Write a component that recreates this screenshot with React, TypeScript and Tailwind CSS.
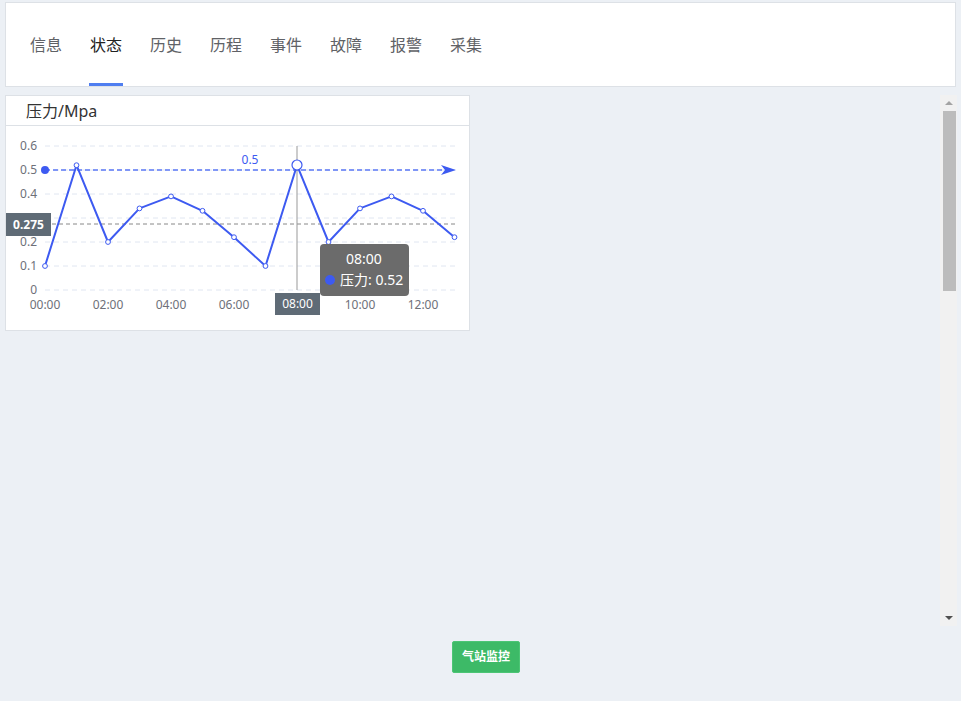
import React from "react";

const tabs = ["信息", "状态", "历史", "历程", "事件", "故障", "报警", "采集"];
const data = [0.1, 0.52, 0.2, 0.34, 0.39, 0.33, 0.22, 0.1, 0.52, 0.2, 0.34, 0.39, 0.33, 0.22];

const X0 = 45;
const STEP = 31.5;
const Y0 = 290;
const PER = 240; // px per 1.0
const xs = (i: number) => X0 + i * STEP;
const ys = (v: number) => Y0 - v * PER;
const font = '"Noto Sans", "Noto Sans CJK SC", sans-serif';

function PressureChart() {
  const pts = data.map((v, i) => `${xs(i)},${ys(v)}`).join(" ");
  return (
    <svg width="463" height="204" className="block">
      <g transform="translate(-6,-126)" style={{ fontFamily: font }}>
        {[0, 0.1, 0.2, 0.3, 0.4, 0.5, 0.6].map((v) => (
          <line key={v} x1={45} x2={456} y1={ys(v)} y2={ys(v)} stroke="#e0e6f1" strokeDasharray="5 4" />
        ))}
        {[0, 0.1, 0.2, 0.4, 0.5, 0.6].map((v) => (
          <text key={v} x={37} y={ys(v) + 4} fontSize="12" fill="#6e7079" textAnchor="end">
            {v === 0 ? "0" : v.toFixed(1)}
          </text>
        ))}
        {["00:00", "02:00", "04:00", "06:00", "10:00", "12:00"].map((t) => (
          <text key={t} x={xs(parseInt(t))} y={309} fontSize="12" fill="#6e7079" textAnchor="middle">
            {t}
          </text>
        ))}

        {/* mark line 0.5 */}
        <line x1={45} x2={446} y1={170} y2={170} stroke="#5b78f5" strokeWidth="1.6" strokeDasharray="5 3" />
        <circle cx={45} cy={170} r={4} fill="#3d5af1" />
        <path d="M441 165 L456 170 L441 175 L445 170 Z" fill="#3d5af1" />
        <text x={250} y={164} fontSize="12" fill="#3d5af1" textAnchor="middle">0.5</text>

        {/* average line */}
        <line x1={45} x2={456} y1={224} y2={224} stroke="#888" strokeDasharray="4 3" />

        {/* axis pointer */}
        <line x1={297} x2={297} y1={146} y2={290} stroke="#999" />

        <polyline points={pts} fill="none" stroke="#3d5af1" strokeWidth="2" strokeLinejoin="round" />
        {data.map((v, i) =>
          i === 8 ? null : (
            <circle key={i} cx={xs(i)} cy={ys(v)} r={2.4} fill="#fff" stroke="#3d5af1" strokeWidth="1" />
          )
        )}
        <circle cx={297} cy={165} r={5} fill="#fff" stroke="#3d5af1" strokeWidth="1.2" />

        <rect x={6} y={213} width={45} height={23} fill="#5f6b76" />
        <text x={28.5} y={229} fontSize="12" fontWeight="bold" fill="#fff" textAnchor="middle">0.275</text>

        <rect x={275} y={293} width={45} height={22} fill="#5f6b76" />
        <text x={297.5} y={308} fontSize="12" fill="#fff" textAnchor="middle">08:00</text>

        <rect x={320} y={244} width={89} height={52} rx={4} fill="#6b6b6b" />
        <text x={364} y={264} fontSize="14" fill="#fff" textAnchor="middle">08:00</text>
        <circle cx={330} cy={280} r={5} fill="#3d5af1" />
        <text x={340} y={285} fontSize="14" fill="#fff">压力: 0.52</text>
      </g>
    </svg>
  );
}

export default function App() {
  return (
    <div className="w-[961px] h-[701px] bg-[#ecf0f5] flex flex-col overflow-hidden" style={{ fontFamily: font }}>
      <div className="mx-[5px] mt-[2px] h-[85px] bg-white border border-[#dde1e6] flex pl-[23px] gap-[26px]">
        {tabs.map((t, i) => (
          <div key={t} className="relative h-full flex items-center px-px">
            <span className={`text-[16px] ${i === 1 ? "text-[#222]" : "text-[#606266]"}`}>{t}</span>
            {i === 1 && <div className="absolute bottom-0 left-0 right-0 h-[3px] bg-[#4f7ef0]" />}
          </div>
        ))}
      </div>

      <div className="mt-[8px] h-[531px] flex">
        <div className="flex-1 pl-[5px]">
          <div className="w-[465px] h-[236px] bg-white border border-[#dde1e6] flex flex-col">
            <div className="h-[30px] border-b border-[#dde1e6] flex items-center pl-[20px] text-[16px] text-[#333]">
              压力/Mpa
            </div>
            <PressureChart />
          </div>
        </div>
        <div className="w-[17px] mr-[4px] bg-[#f1f1f1] flex flex-col items-center">
          <div className="h-[16px] flex items-center justify-center">
            <div className="w-0 h-0 border-x-[4px] border-x-transparent border-b-[4px] border-b-[#a3a3a3]" />
          </div>
          <div className="w-[13px] h-[180px] bg-[#bcbcbc] ml-[2px]" />
          <div className="flex-1" />
          <div className="h-[16px] flex items-center justify-center">
            <div className="w-0 h-0 border-x-[4px] border-x-transparent border-t-[4px] border-t-[#505050]" />
          </div>
        </div>
      </div>

      <div className="mt-[15px] ml-[452px]">
        <button className="w-[68px] h-[32px] bg-[#3dba67] border border-[#4cc575] text-white text-[12px] font-bold rounded-[2px]">
          气站监控
        </button>
      </div>
    </div>
  );
}
